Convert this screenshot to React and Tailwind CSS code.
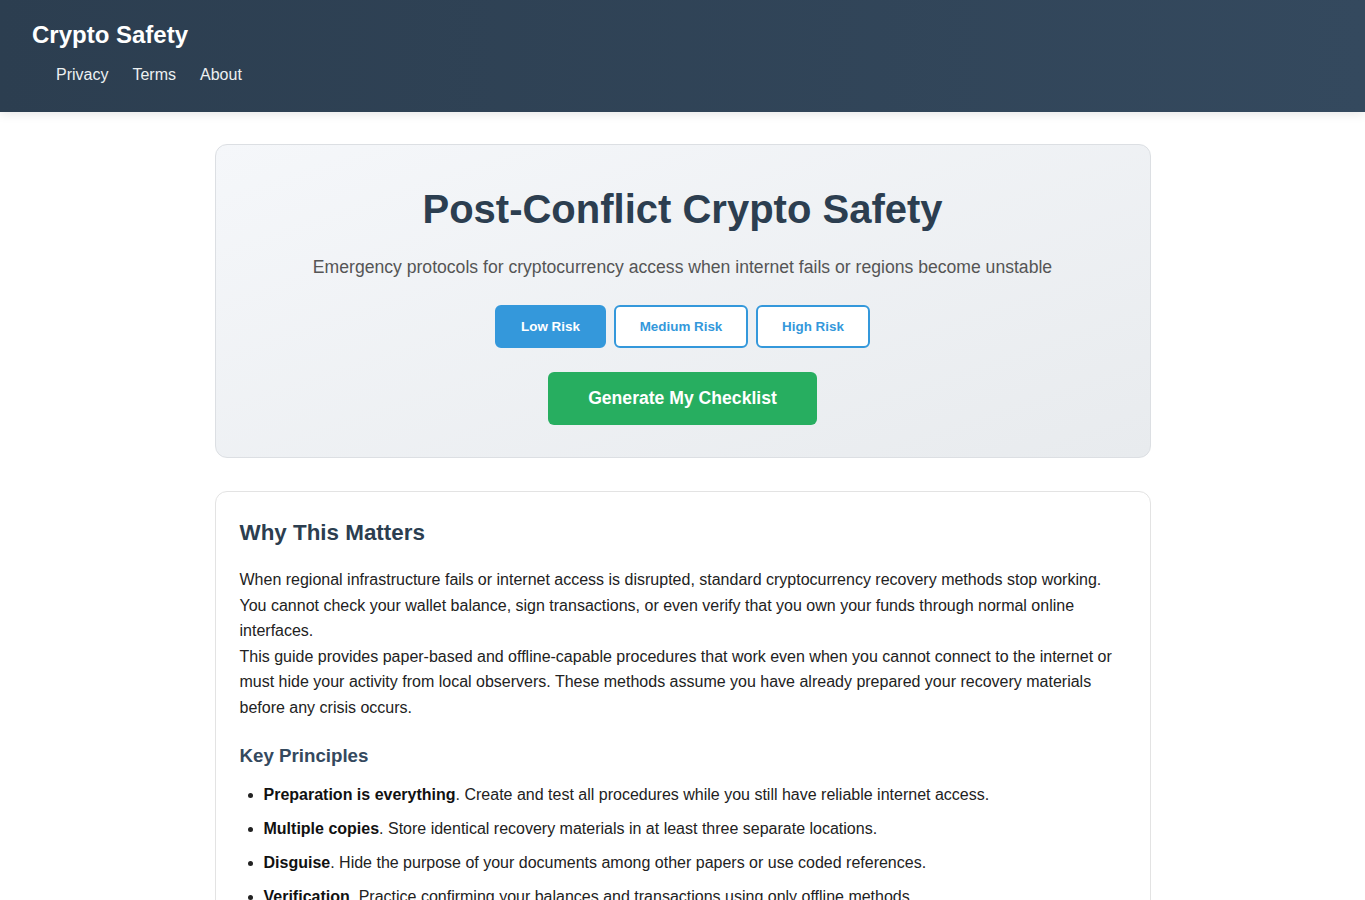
export default function App() {
  const principles = [
    ["Preparation is everything", "Create and test all procedures while you still have reliable internet access."],
    ["Multiple copies", "Store identical recovery materials in at least three separate locations."],
    ["Disguise", "Hide the purpose of your documents among other papers or use coded references."],
    ["Verification", "Practice confirming your balances and transactions using only offline methods."],
  ];
  return (
    <div className="min-h-screen bg-white text-[#333]" style={{ fontFamily: '"Liberation Sans", Arial, sans-serif' }}>
      <header className="h-[112px] bg-gradient-to-r from-[#2c3e50] to-[#34495e] px-8 pt-[19px] shadow-[0_2px_10px_rgba(0,0,0,0.1)]">
        <h1 className="text-[24px] font-bold leading-[32px] text-white">Crypto Safety</h1>
        <nav className="mt-[13px] flex gap-6 pl-6 text-[16px] leading-[22px] text-[#ecf0f1]">
          <a>Privacy</a>
          <a>Terms</a>
          <a>About</a>
        </nav>
      </header>

      <main className="mx-auto w-[936px] pt-[32px]">
        <section className="rounded-xl border border-[#dcdfe3] bg-gradient-to-br from-[#f5f7fa] to-[#e8ebee] px-10 pt-[40px] pb-[32px] text-center">
          <h2 className="text-[40px] font-bold leading-[48px] text-[#2c3e50]">Post-Conflict Crypto Safety</h2>
          <p className="mt-[20px] text-[17.6px] leading-[29px] text-[#555]">
            Emergency protocols for cryptocurrency access when internet fails or regions become unstable
          </p>
          <div className="mt-[23px] flex justify-center gap-2">
            <button className="h-[43px] w-[111px] rounded-md border-2 border-[#3498db] bg-[#3498db] pt-[2px] text-[13.4px] font-bold text-white">Low Risk</button>
            <button className="h-[43px] w-[134px] rounded-md border-2 border-[#3498db] bg-white pt-[2px] text-[13.4px] font-bold text-[#3498db]">Medium Risk</button>
            <button className="h-[43px] w-[114px] rounded-md border-2 border-[#3498db] bg-white pt-[2px] text-[13.4px] font-bold text-[#3498db]">High Risk</button>
          </div>
          <button className="mt-[24px] h-[53px] w-[269px] rounded-md bg-[#27ae60] text-[17.6px] font-bold text-white">Generate My Checklist</button>
        </section>

        <section className="mt-[33px] rounded-xl border border-[#e3e3e3] bg-white px-6 pt-[27px] pb-6">
          <h2 className="text-[22.4px] font-bold leading-[27px] text-[#2c3e50]">Why This Matters</h2>
          <div className="mt-[21px] text-[16px] leading-[25.6px] text-[#222]">
            <p>
              When regional infrastructure fails or internet access is disrupted, standard cryptocurrency recovery methods stop working. You cannot check your wallet balance, sign transactions, or even verify that you own your funds through normal online interfaces.
            </p>
            <p>
              This guide provides paper-based and offline-capable procedures that work even when you cannot connect to the internet or must hide your activity from local observers. These methods assume you have already prepared your recovery materials before any crisis occurs.
            </p>
          </div>
          <h3 className="mt-[23px] text-[18.72px] font-bold leading-[23px] text-[#34495e]">Key Principles</h3>
          <ul className="mt-[15px] list-disc pl-6 text-[16px] leading-[25.6px] text-[#222]">
            {principles.map(([b, t]) => (
              <li key={b} className="mb-[8.4px]">
                <strong className="font-bold text-[#111]">{b}</strong>. {t}
              </li>
            ))}
          </ul>
        </section>
        <div className="h-10" />
      </main>
    </div>
  );
}
